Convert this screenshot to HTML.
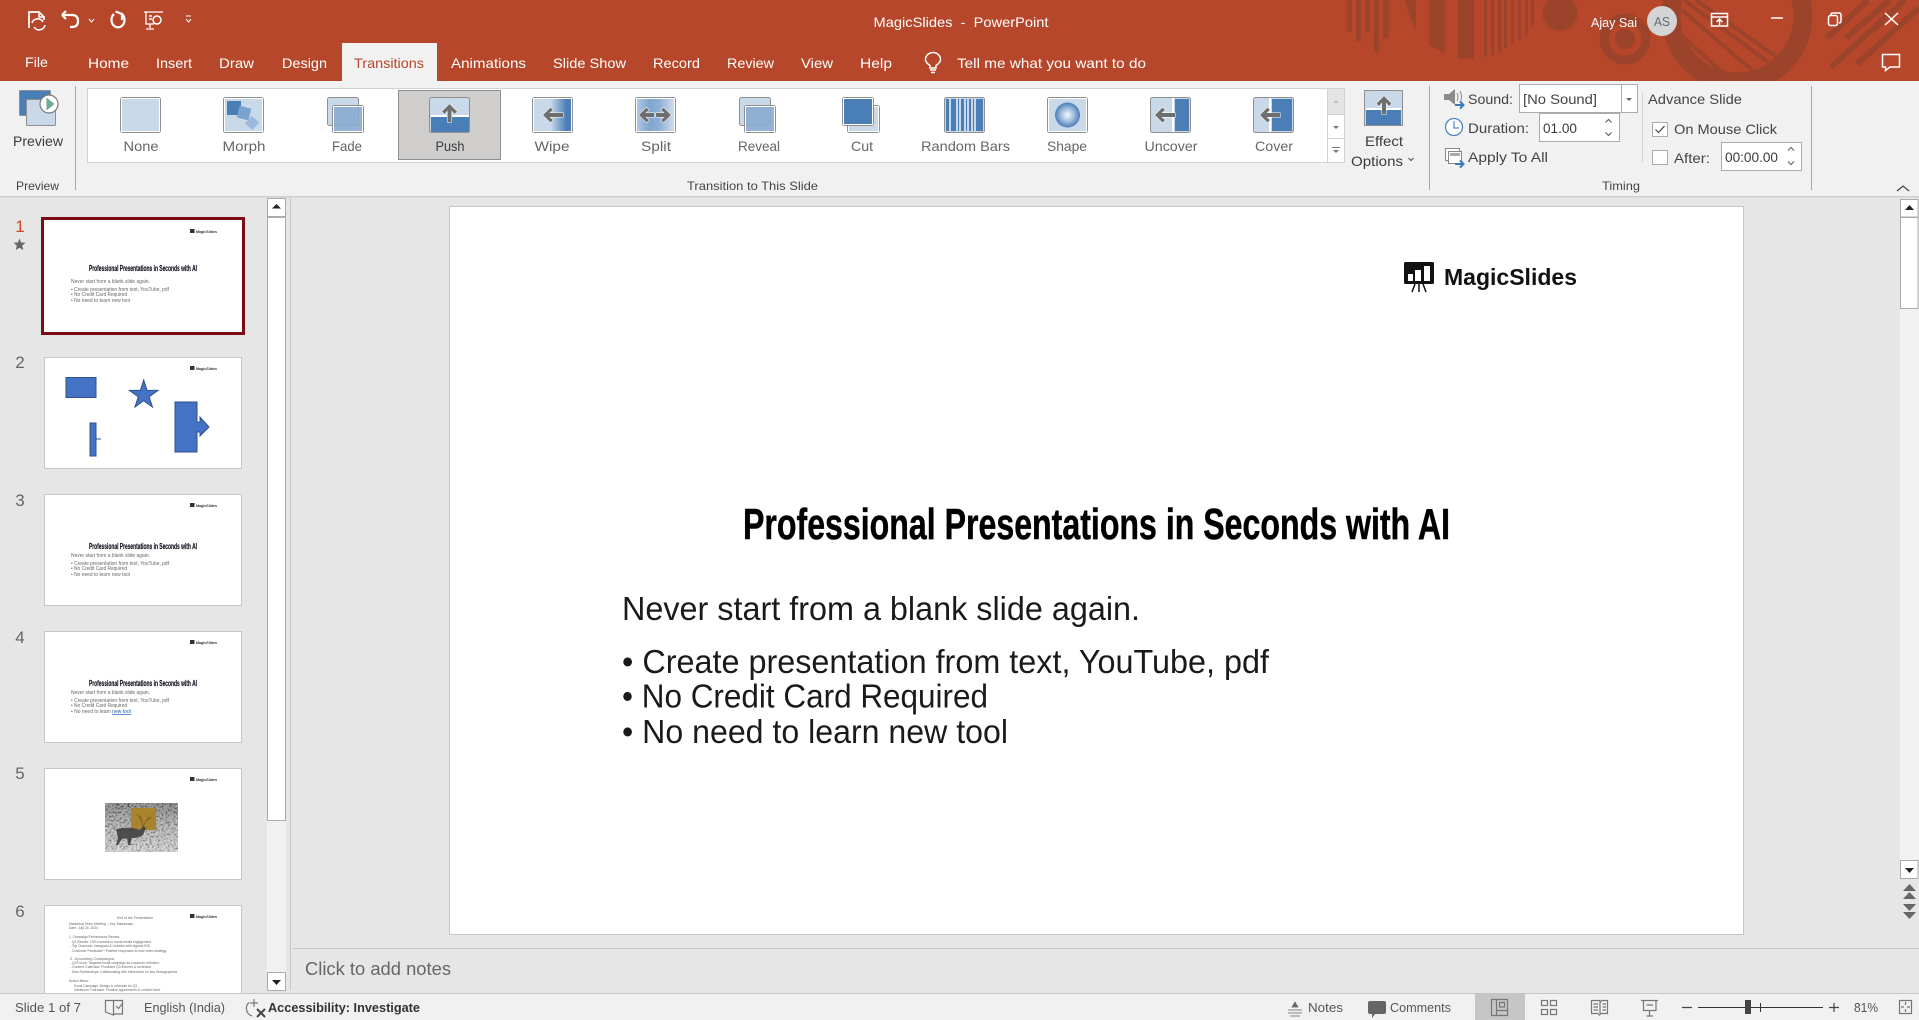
<!DOCTYPE html>
<html lang="en"><head><meta charset="utf-8"><title>MagicSlides - PowerPoint</title>
<style>
html,body{margin:0;padding:0;width:1919px;height:1020px;overflow:hidden;background:#e6e6e6}
svg{display:block}
text{font-family:"Liberation Sans",Arial,sans-serif}
.w{fill:#fff;font-size:14px}
.d{fill:#444;font-size:14px}
.g{fill:#666;font-size:14px}
.gl{fill:#444;font-size:12px}
.st{fill:#555;font-size:13px}
.n{fill:#666;font-size:17px}
.ib{fill:#c9d9ea;stroke:#8f8f8f}
.iw{fill:none;stroke:#fff}
.ar{fill:#6e6e6e;stroke:#fff;stroke-width:1;paint-order:stroke}
.wl{fill:none;stroke:#fff;stroke-width:1.5}
.dc{fill:#9c432b}
.ds{stroke:#9c432b;fill:none}
.bd{fill:#fff;stroke:#ababab}
.ic{fill:none;stroke:#777;stroke-width:1.2}
.tt{font-weight:bold;fill:#0d0d1a;font-size:8px;stroke:#0d0d1a;stroke-width:.15}
.tb{fill:#666;font-size:5.5px}
.tl{fill:#333;font-size:4px;font-weight:bold}
.t6{fill:#666;font-size:3.6px}
.sh{fill:#4472c4;stroke:#2f528f;stroke-width:1}
</style></head><body>
<svg xmlns="http://www.w3.org/2000/svg" width="1919" height="1020" viewBox="0 0 1919 1020">
<defs>
<clipPath id="barclip"><rect width="1919" height="81"/></clipPath>
<linearGradient id="wipe" x1="0" x2="1" y1="0" y2="0"><stop offset="0" stop-color="#c9d9ea"/><stop offset=".45" stop-color="#c9d9ea"/><stop offset=".85" stop-color="#4a7eb7"/><stop offset="1" stop-color="#4a7eb7"/></linearGradient>
<linearGradient id="split" x1="0" x2="1" y1="0" y2="0"><stop offset="0" stop-color="#b7cce3"/><stop offset=".35" stop-color="#7ea5d0"/><stop offset=".6" stop-color="#8fb0d6"/><stop offset="1" stop-color="#d5e1ee"/></linearGradient>
<radialGradient id="shape"><stop offset="0" stop-color="#f5f8fb"/><stop offset=".5" stop-color="#a5c0de"/><stop offset="1" stop-color="#4a7eb7"/></radialGradient>
<filter id="noise" x="0" y="0" width="1" height="1"><feTurbulence type="fractalNoise" baseFrequency=".5" numOctaves="2" seed="4"/><feColorMatrix values="2.2 0 0 0 -.6  2.2 0 0 0 -.6  2.2 0 0 0 -.6  0 0 0 0 1"/></filter>
<linearGradient id="pic" x1="0" x2="0" y1="0" y2="1"><stop offset="0" stop-color="#666"/><stop offset=".45" stop-color="#a5a5a5"/><stop offset="1" stop-color="#d5d5d5"/></linearGradient>
<path id="la" d="M0 0L7.5-7.5 10-5 6.5-2H20V2H6.5L10 5 7.5 7.5Z"/>
</defs>

<!-- backgrounds -->
<rect width="1919" height="1020" fill="#e6e6e6"/>
<rect width="1919" height="81" fill="#b7472a"/>
<rect y="81" width="1919" height="115" fill="#f1f1f1"/>
<rect y="196" width="1919" height="1.5" fill="#cfcfcf"/>

<!-- title bar decoration -->
<g clip-path="url(#barclip)">
<rect class="dc" x="1347" width="5" height="32"/><rect class="dc" x="1356" width="5" height="41"/><rect class="dc" x="1365" width="5" height="32"/><rect class="dc" x="1374" width="5" height="52"/><rect class="dc" x="1383" width="6" height="38"/>
<path class="dc" d="M1405 0C1408 12 1411 22 1416 30V0Z"/>
<path class="dc" d="M1429 0H1445V54L1429 45Z"/>
<path class="dc" d="M1458 0H1474V59L1458 58Z"/>
<rect class="dc" x="1484" width="3" height="57"/><rect class="dc" x="1491" width="3" height="55"/><rect class="dc" x="1498" width="3" height="52"/><rect class="dc" x="1504" width="3" height="48"/><rect class="dc" x="1511" width="3" height="44"/><rect class="dc" x="1518" width="3" height="40"/><rect class="dc" x="1525" width="3" height="35"/><rect class="dc" x="1531" width="3" height="27"/>
<circle class="dc" cx="1560" cy="13" r="17.5"/>
<circle class="dc" cx="1625" cy="39" r="10"/><circle class="ds" cx="1625" cy="39" r="21" stroke-width="9"/>
<circle class="ds" cx="1737" cy="16" r="66" stroke-width="19"/>
<g class="ds" stroke-width="4"><path d="M1684 0L1768 62"/><path d="M1696 0L1778 58"/><path d="M1682 10L1752 70"/><path d="M1682 36L1722 72"/></g>
<g class="ds" stroke-width="6"><path d="M1827 38L1868 0"/><path d="M1846 38L1890 0"/><path d="M1831 67L1905 0"/><path d="M1857 64L1919 8"/></g>
</g>

<!-- quick access -->
<g class="wl">
<path d="M29 28V12H39L44 17V20" stroke-width="1.800"/><path d="M39 12V17H44"/><path d="M32 23A6 6 0 0 1 43 22M45 25A6 6 0 0 1 34 27" stroke-width="1.600"/>
<path d="M62 15L66 11M62 15L66 19M62 15H72Q78 15 78 21T72 27H70" stroke-width="2.200"/>
<path d="M89 19L91.500 22L94 19" stroke-width="1"/>
<path d="M114 14A6.500 7.500 0 1 0 122 14M115.500 11.500L122 14V20" stroke-width="2.200"/>
<path d="M144 12H163M146 12V24H154M150 24V28M146 29H154" stroke-width="1.300"/><circle cx="157" cy="20" r="4"/><path d="M149 16H152M149 19H152"/>
<path d="M186 16H191M186 19L188.500 22L191 19" stroke-width="1"/>
</g>
<text class="w" x="961" y="27" text-anchor="middle" textLength="175" lengthAdjust="spacingAndGlyphs" xml:space="preserve">MagicSlides  -  PowerPoint</text>

<!-- top right -->
<text class="w" x="1591" y="27" style="font-size:13px" textLength="46" lengthAdjust="spacingAndGlyphs">Ajay Sai</text>
<circle cx="1662" cy="21" r="15" fill="#d4d4d4"/>
<text x="1662" y="26" text-anchor="middle" fill="#5f6b78" font-size="13" textLength="16" lengthAdjust="spacingAndGlyphs">AS</text>
<g class="wl" stroke-width="1.300">
<rect x="1711.500" y="13.500" width="16" height="12.500"/><path d="M1711 17H1728M1719.500 25V19M1716.500 22L1719.500 19L1722.500 22"/>
<path d="M1771 18H1783" stroke-width="1.500"/>
<rect x="1828.500" y="15.500" width="9" height="10" rx="2"/><path d="M1831 15V14Q1831 13 1833 13H1839Q1841 13 1841 15V21Q1841 23 1839 23"/>
<path d="M1885 13L1898 25M1898 13L1885 25" stroke-width="1.500"/>
<path d="M1882.500 54.500H1899.500V67H1890L1885.500 70.500V67H1882.500Z"/>
</g>

<!-- tabs -->
<rect x="342" y="43" width="95" height="38" fill="#f1f1f1"/>
<text class="w" x="25" y="67" textLength="23" lengthAdjust="spacingAndGlyphs">File</text>
<text class="w" x="88" y="68" textLength="41" lengthAdjust="spacingAndGlyphs">Home</text>
<text class="w" x="156" y="68" textLength="36" lengthAdjust="spacingAndGlyphs">Insert</text>
<text class="w" x="219" y="68" textLength="35" lengthAdjust="spacingAndGlyphs">Draw</text>
<text class="w" x="282" y="68" textLength="45" lengthAdjust="spacingAndGlyphs">Design</text>
<text x="354" y="68" fill="#b7472a" font-size="14" textLength="70" lengthAdjust="spacingAndGlyphs">Transitions</text>
<text class="w" x="451" y="68" textLength="75" lengthAdjust="spacingAndGlyphs">Animations</text>
<text class="w" x="553" y="68" textLength="73" lengthAdjust="spacingAndGlyphs">Slide Show</text>
<text class="w" x="653" y="68" textLength="47" lengthAdjust="spacingAndGlyphs">Record</text>
<text class="w" x="727" y="68" textLength="47" lengthAdjust="spacingAndGlyphs">Review</text>
<text class="w" x="801" y="68" textLength="32" lengthAdjust="spacingAndGlyphs">View</text>
<text class="w" x="860" y="68" textLength="32" lengthAdjust="spacingAndGlyphs">Help</text>
<path class="wl" stroke-width="1.200" d="M930 68V65.500Q925.500 62.500 925.500 59.500A7.500 7 0 0 1 940.500 59.500Q940.500 62.500 936 65.500V68ZM930 70H936M931 72.500H935"/>
<text class="w" x="957" y="68" textLength="189" lengthAdjust="spacingAndGlyphs">Tell me what you want to do</text>

<!-- preview button -->
<rect x="19.500" y="90.500" width="31" height="25" rx="1" fill="#4a7eb7" stroke="#8f8f8f"/>
<rect x="26.500" y="99.500" width="29" height="26" rx="1" fill="#c9d9ea" stroke="#8f8f8f"/>
<circle cx="49" cy="104" r="9" fill="#fff" stroke="#777" stroke-width="1.200"/>
<path d="M46.500 97.500L54.500 104L46.500 110.500Z" fill="#6fa893"/>
<text class="d" x="13" y="146" textLength="50" lengthAdjust="spacingAndGlyphs" style="fill:#3b3b3b">Preview</text>
<text class="gl" x="16" y="190" textLength="43" lengthAdjust="spacingAndGlyphs">Preview</text>
<rect x="75" y="86" width="1" height="104" fill="#a6a6a6"/>

<!-- gallery -->
<rect x="87.500" y="88.500" width="1257" height="74" fill="#fff" stroke="#d2d2d2"/>
<rect x="398.500" y="90.500" width="102" height="69" fill="#cfcecc" stroke="#8e8e8e"/>

<!-- None -->
<rect class="ib" x="120.500" y="97.500" width="40" height="35" rx="2"/><rect class="iw" x="121.500" y="98.500" width="38" height="33"/>
<!-- Morph -->
<rect class="ib" x="223.500" y="97.500" width="40" height="35" rx="2"/><rect class="iw" x="224.500" y="98.500" width="38" height="33"/>
<rect x="227" y="101" width="14" height="14" fill="#4a7eb7"/>
<rect x="238" y="107" width="12" height="12" fill="#7ba3cf" transform="rotate(15 244 113)"/>
<rect x="247" y="118" width="10" height="10" fill="#9ab9dc" transform="rotate(40 252 123)"/>
<!-- Fade -->
<rect class="ib" x="327.500" y="97.500" width="31" height="28" rx="2"/>
<rect x="332.500" y="105.500" width="31" height="27" rx="2" fill="#8aabd0" fill-opacity=".9" stroke="#8f8f8f"/><rect class="iw" x="333.500" y="106.500" width="29" height="25"/>
<!-- Push -->
<rect class="ib" x="429.500" y="97.500" width="40" height="35" rx="2"/>
<rect x="431" y="117" width="38" height="15" fill="#4a7eb7"/><rect x="431" y="115" width="38" height="2" fill="#fff"/>
<path class="ar" transform="translate(449.500 104) rotate(90)" d="M0 0L7.500-7.500 10-5 6.500-2H18V2H6.500L10 5 7.500 7.500Z"/>
<!-- Wipe -->
<rect x="532.500" y="97.500" width="40" height="35" rx="2" fill="url(#wipe)" stroke="#8f8f8f"/><rect class="iw" x="533.500" y="98.500" width="38" height="33"/>
<use href="#la" class="ar" x="543" y="115"/>
<!-- Split -->
<rect x="635.500" y="97.500" width="40" height="35" rx="2" fill="url(#split)" stroke="#8f8f8f"/><rect class="iw" x="636.500" y="98.500" width="38" height="33"/>
<path class="ar" transform="translate(639 115)" d="M0 0L7.500-7.500 10-5 6.500-2H15V2H6.500L10 5 7.500 7.500Z"/>
<path class="ar" transform="translate(671 115) scale(-1 1)" d="M0 0L7.500-7.500 10-5 6.500-2H15V2H6.500L10 5 7.500 7.500Z"/>
<!-- Reveal -->
<rect class="ib" x="739.500" y="97.500" width="31" height="28" rx="2"/>
<rect x="744.500" y="105.500" width="31" height="27" rx="2" fill="#8aabd0" fill-opacity=".9" stroke="#8f8f8f"/><rect class="iw" x="745.500" y="106.500" width="29" height="25"/>
<!-- Cut -->
<rect class="ib" x="847.500" y="105.500" width="32" height="27" rx="2"/><rect class="iw" x="848.500" y="106.500" width="30" height="25"/>
<rect x="842.500" y="97.500" width="31" height="28" rx="2" fill="#4a7eb7" stroke="#8f8f8f"/><rect class="iw" x="843.500" y="98.500" width="29" height="26"/>
<!-- Random bars -->
<rect class="ib" x="944.500" y="97.500" width="40" height="35" rx="2"/>
<g fill="#4a7eb7"><rect x="946" y="99" width="3" height="32"/><rect x="951" y="99" width="5" height="32"/><rect x="958" y="99" width="1" height="32"/><rect x="961" y="99" width="3" height="32"/><rect x="966" y="99" width="1" height="32"/><rect x="969" y="99" width="2" height="32"/><rect x="973" y="99" width="1" height="32"/><rect x="976" y="99" width="7" height="32"/></g>
<!-- Shape -->
<rect class="ib" x="1047.500" y="97.500" width="40" height="35" rx="2"/><rect class="iw" x="1048.500" y="98.500" width="38" height="33"/>
<circle cx="1067.500" cy="115" r="12.500" fill="url(#shape)"/>
<!-- Uncover -->
<rect class="ib" x="1150.500" y="97.500" width="40" height="35" rx="2"/>
<rect x="1175" y="99" width="14" height="32" fill="#4a7eb7"/><rect x="1172" y="98" width="2" height="34" fill="#fff"/>
<use href="#la" class="ar" x="1155" y="115"/>
<!-- Cover -->
<rect class="ib" x="1253.500" y="97.500" width="40" height="35" rx="2"/>
<rect x="1272" y="99" width="20" height="32" fill="#4a7eb7"/><rect x="1269" y="98" width="2" height="34" fill="#fff"/>
<use href="#la" class="ar" x="1260" y="115"/>

<g class="g">
<text x="141" y="151" text-anchor="middle" textLength="35" lengthAdjust="spacingAndGlyphs">None</text>
<text x="244" y="151" text-anchor="middle" textLength="43" lengthAdjust="spacingAndGlyphs">Morph</text>
<text x="347" y="151" text-anchor="middle" textLength="30" lengthAdjust="spacingAndGlyphs">Fade</text>
<text x="450" y="151" text-anchor="middle" textLength="29" lengthAdjust="spacingAndGlyphs" style="fill:#3b3b3b">Push</text>
<text x="552" y="151" text-anchor="middle" textLength="35" lengthAdjust="spacingAndGlyphs">Wipe</text>
<text x="656" y="151" text-anchor="middle" textLength="30" lengthAdjust="spacingAndGlyphs">Split</text>
<text x="759" y="151" text-anchor="middle" textLength="42" lengthAdjust="spacingAndGlyphs">Reveal</text>
<text x="862" y="151" text-anchor="middle" textLength="22" lengthAdjust="spacingAndGlyphs">Cut</text>
<text x="965.500" y="151" text-anchor="middle" textLength="89" lengthAdjust="spacingAndGlyphs">Random Bars</text>
<text x="1067" y="151" text-anchor="middle" textLength="40" lengthAdjust="spacingAndGlyphs">Shape</text>
<text x="1171" y="151" text-anchor="middle" textLength="53" lengthAdjust="spacingAndGlyphs">Uncover</text>
<text x="1274" y="151" text-anchor="middle" textLength="38" lengthAdjust="spacingAndGlyphs">Cover</text>
</g>

<!-- gallery scroll -->
<rect x="1327.500" y="88.500" width="17" height="26" fill="#e4e4e4" stroke="#d2d2d2"/>
<rect x="1327.500" y="114.500" width="17" height="24" fill="#fff" stroke="#d2d2d2"/>
<rect x="1327.500" y="138.500" width="17" height="24" fill="#fff" stroke="#d2d2d2"/>
<path d="M1333 103L1336 100L1339 103Z" fill="#bcbcbc"/>
<path d="M1333 126L1339 126L1336 129Z" fill="#777"/>
<path d="M1332 147H1340V148H1332ZM1333 150H1339L1336 153Z" fill="#777"/>

<text class="gl" x="687" y="190" textLength="131" lengthAdjust="spacingAndGlyphs">Transition to This Slide</text>

<!-- Effect options -->
<rect x="1364.500" y="90.500" width="38" height="35" fill="#c9d9ea" stroke="#8f8f8f"/>
<rect x="1366" y="110" width="35" height="15" fill="#4a7eb7"/><rect x="1366" y="108" width="35" height="2" fill="#fff"/>
<path class="ar" transform="translate(1384 96) rotate(90)" d="M0 0L7.500-7.500 10-5 6.500-2H18V2H6.500L10 5 7.500 7.500Z"/>
<text class="d" x="1365" y="146" textLength="38" lengthAdjust="spacingAndGlyphs" style="fill:#3b3b3b">Effect</text>
<text class="d" x="1351" y="166" textLength="52" lengthAdjust="spacingAndGlyphs" style="fill:#3b3b3b">Options</text>
<path d="M1408.500 158L1411 160.500L1413.500 158" fill="none" stroke="#444"/>

<rect x="1429" y="86" width="1" height="104" fill="#a6a6a6"/>

<!-- Timing -->
<path d="M1444 94H1449L1455 89V105L1449 100H1444Z" fill="#8a8a8a"/>
<path d="M1457 93Q1459 97 1457 101M1460 91Q1463 97 1460 103" fill="none" stroke="#8a8a8a"/>
<path d="M1455 105H1463M1460 101.500L1463.500 105L1460 108.500" fill="none" stroke="#3f7ab8" stroke-width="2"/>
<text class="d" x="1468" y="104" textLength="45" lengthAdjust="spacingAndGlyphs">Sound:</text>
<rect class="bd" x="1519.500" y="84.500" width="102" height="28"/>
<rect class="bd" x="1621.500" y="84.500" width="16" height="28"/>
<path d="M1626 98H1632L1629 101Z" fill="#666"/>
<text x="1523" y="104" fill="#444" font-size="14" textLength="74" lengthAdjust="spacingAndGlyphs">[No Sound]</text>

<circle cx="1454" cy="127" r="8.500" fill="#fff" stroke="#4f86c0" stroke-width="1.300"/>
<path d="M1454 121V128H1459" fill="none" stroke="#4f86c0" stroke-width="1.200"/>
<text class="d" x="1468" y="133" textLength="61" lengthAdjust="spacingAndGlyphs">Duration:</text>
<rect class="bd" x="1539.500" y="113.500" width="80" height="28"/>
<text x="1543" y="133" fill="#3b3b3b" font-size="14" textLength="34" lengthAdjust="spacingAndGlyphs">01.00</text>
<path d="M1605.500 122.500L1608.500 119.500L1611.500 122.500M1605.500 132.500L1608.500 135.500L1611.500 132.500" fill="none" stroke="#555"/>

<rect x="1445.500" y="148.500" width="14" height="12" fill="#fff" stroke="#888"/>
<rect x="1448.500" y="151.500" width="13" height="12" fill="#fff" stroke="#888"/>
<rect x="1450" y="153" width="10" height="3" fill="#aaa"/>
<path d="M1455 164H1463M1460 160.500L1463.500 164L1460 167.500" fill="none" stroke="#3f7ab8" stroke-width="2"/>
<text class="d" x="1468" y="162" textLength="80" lengthAdjust="spacingAndGlyphs">Apply To All</text>

<rect x="1642" y="93" width="1" height="69" fill="#d2d2d2"/>
<text class="d" x="1648" y="104" textLength="94" lengthAdjust="spacingAndGlyphs">Advance Slide</text>
<rect class="bd" x="1652.500" y="122.500" width="15" height="14" stroke="#888"/>
<path d="M1655.500 129.500L1658.500 132.500L1664.500 126" fill="none" stroke="#444" stroke-width="1.200"/>
<text class="d" x="1674" y="134" textLength="103" lengthAdjust="spacingAndGlyphs">On Mouse Click</text>
<rect class="bd" x="1652.500" y="150.500" width="15" height="14" stroke="#888"/>
<text class="d" x="1674" y="163" textLength="36" lengthAdjust="spacingAndGlyphs">After:</text>
<rect class="bd" x="1721.500" y="142.500" width="80" height="28"/>
<text x="1725" y="162" fill="#3b3b3b" font-size="14" textLength="53" lengthAdjust="spacingAndGlyphs">00:00.00</text>
<path d="M1788 150.500L1791 147.500L1794 150.500M1788 161.500L1791 164.500L1794 161.500" fill="none" stroke="#555"/>
<text class="gl" x="1602" y="190" textLength="38" lengthAdjust="spacingAndGlyphs">Timing</text>
<rect x="1811" y="86" width="1" height="104" fill="#a6a6a6"/>
<path d="M1897 191L1903 186L1909 191" fill="none" stroke="#444" stroke-width="1.200"/>

<!-- left scrollbar -->
<rect x="267" y="198" width="19" height="792" fill="#f1f1f1"/>
<rect x="267.500" y="198.500" width="18" height="18" fill="#fff" stroke="#ababab"/>
<path d="M272 208.500H281L276.500 204Z" fill="#222"/>
<rect x="267.500" y="217.500" width="18" height="603" fill="#fff" stroke="#ababab"/>
<rect x="267.500" y="972.500" width="18" height="18" fill="#fff" stroke="#ababab"/>
<path d="M272 980H281L276.500 985Z" fill="#222"/>
<rect x="290" y="198" width="1" height="792" fill="#c6c6c6"/>

<!-- thumbnails -->
<text class="n" x="20" y="232" text-anchor="middle" style="fill:#d24726">1</text>
<path d="M19.500 238.500L21 242.500L25.500 242.800L22.200 245.600L23.300 250L19.500 247.700L15.700 250L16.800 245.600L13.500 242.800L18 242.500Z" fill="#666"/>
<text class="n" x="20" y="368" text-anchor="middle">2</text>
<text class="n" x="20" y="506" text-anchor="middle">3</text>
<text class="n" x="20" y="643" text-anchor="middle">4</text>
<text class="n" x="20" y="779" text-anchor="middle">5</text>
<text class="n" x="20" y="917" text-anchor="middle">6</text>

<!-- thumb 1 -->
<rect x="42.500" y="218.500" width="201" height="115" fill="#fff" stroke="#7a0c14" stroke-width="3"/>
<g transform="translate(44 220)">
<rect x="146" y="9" width="4.500" height="4" fill="#333"/><text class="tl" x="152" y="13" textLength="21" lengthAdjust="spacingAndGlyphs">MagicSlides</text>
<text class="tt" x="45" y="51" textLength="108" lengthAdjust="spacingAndGlyphs">Professional Presentations in Seconds with AI</text>
<text class="tb" x="27" y="63" textLength="79" lengthAdjust="spacingAndGlyphs">Never start from a blank slide again.</text>
<text class="tb" x="27" y="71" textLength="98" lengthAdjust="spacingAndGlyphs">• Create presentation from text, YouTube, pdf</text>
<text class="tb" x="27" y="76" textLength="56" lengthAdjust="spacingAndGlyphs">• No Credit Card Required</text>
<text class="tb" x="27" y="82" textLength="59" lengthAdjust="spacingAndGlyphs">• No need to learn new tool</text>
</g>

<!-- thumb 2 -->
<rect x="44.500" y="357.500" width="197" height="111" fill="#fff" stroke="#c6c6c6"/>
<rect x="190" y="366" width="4.500" height="4" fill="#333"/><text class="tl" x="196" y="370" textLength="21" lengthAdjust="spacingAndGlyphs">MagicSlides</text>
<rect class="sh" x="66" y="377.500" width="30" height="20"/>
<polygon class="sh" points="143.700,380 147.050,390.400 158,390.400 149.100,396.800 152.500,407.100 143.700,400.700 134.900,407.100 138.300,396.800 129.400,390.400 140.350,390.400"/>
<path class="sh" d="M175 402H197V422H200V417L209 427L200 436V432H197V452H175Z"/>
<path class="sh" d="M90 423H96V456H90Z"/><path d="M96 439H101" stroke="#2f528f"/>

<!-- thumb 3 -->
<rect x="44.500" y="494.500" width="197" height="111" fill="#fff" stroke="#c6c6c6"/>
<g transform="translate(44 494)">
<rect x="146" y="9" width="4.500" height="4" fill="#333"/><text class="tl" x="152" y="13" textLength="21" lengthAdjust="spacingAndGlyphs">MagicSlides</text>
<text class="tt" x="45" y="55" textLength="108" lengthAdjust="spacingAndGlyphs">Professional Presentations in Seconds with AI</text>
<text class="tb" x="27" y="63" textLength="79" lengthAdjust="spacingAndGlyphs">Never start from a blank slide again.</text>
<text class="tb" x="27" y="71" textLength="98" lengthAdjust="spacingAndGlyphs">• Create presentation from text, YouTube, pdf</text>
<text class="tb" x="27" y="76" textLength="56" lengthAdjust="spacingAndGlyphs">• No Credit Card Required</text>
<text class="tb" x="27" y="82" textLength="59" lengthAdjust="spacingAndGlyphs">• No need to learn new tool</text>
</g>

<!-- thumb 4 -->
<rect x="44.500" y="631.500" width="197" height="111" fill="#fff" stroke="#c6c6c6"/>
<g transform="translate(44 631)">
<rect x="146" y="9" width="4.500" height="4" fill="#333"/><text class="tl" x="152" y="13" textLength="21" lengthAdjust="spacingAndGlyphs">MagicSlides</text>
<text class="tt" x="45" y="55" textLength="108" lengthAdjust="spacingAndGlyphs">Professional Presentations in Seconds with AI</text>
<text class="tb" x="27" y="63" textLength="79" lengthAdjust="spacingAndGlyphs">Never start from a blank slide again.</text>
<text class="tb" x="27" y="71" textLength="98" lengthAdjust="spacingAndGlyphs">• Create presentation from text, YouTube, pdf</text>
<text class="tb" x="27" y="76" textLength="56" lengthAdjust="spacingAndGlyphs">• No Credit Card Required</text>
<text class="tb" x="27" y="82" textLength="40" lengthAdjust="spacingAndGlyphs">• No need to learn</text>
<text class="tb" x="68" y="82" textLength="19" lengthAdjust="spacingAndGlyphs" style="fill:#1f5fb0">new tool</text>
<rect x="68" y="83" width="19" height=".7" fill="#1f5fb0"/>
</g>

<!-- thumb 5 -->
<rect x="44.500" y="768.500" width="197" height="111" fill="#fff" stroke="#c6c6c6"/>
<rect x="190" y="777" width="4.500" height="4" fill="#333"/><text class="tl" x="196" y="781" textLength="21" lengthAdjust="spacingAndGlyphs">MagicSlides</text>
<rect x="105" y="803" width="73" height="49" filter="url(#noise)"/>
<rect x="105" y="803" width="73" height="49" fill="url(#pic)" opacity=".6"/>
<rect x="131" y="808" width="25" height="22" fill="#a8842f"/>
<path d="M116 829Q130 826 140 830L143 826L146 828L143 835Q140 838 132 838L130 845H128L127 838L122 839L118 845H116L118 838Z" fill="#3a3a3a" opacity=".85"/>
<path d="M143 826L140 816M143 826L150 815M141 820L137 814M147 820L152 817" stroke="#6d5020" stroke-width=".6" fill="none"/>

<!-- thumb 6 -->
<rect x="44.500" y="905.500" width="197" height="110" fill="#fff" stroke="#c6c6c6"/>
<rect x="190" y="914" width="4.500" height="4" fill="#333"/><text class="tl" x="196" y="918" textLength="21" lengthAdjust="spacingAndGlyphs">MagicSlides</text>
<g class="t6">
<text x="117" y="919" textLength="36" lengthAdjust="spacingAndGlyphs">End of the Presentation</text>
<text x="69" y="925" textLength="64" lengthAdjust="spacingAndGlyphs">Marketing Team Meeting – Key Takeaways</text>
<text x="69" y="929" textLength="29" lengthAdjust="spacingAndGlyphs">Date: July 25, 2024</text>
<text x="69" y="938" textLength="51" lengthAdjust="spacingAndGlyphs">1. Campaign Performance Review:</text>
<text x="70" y="943" textLength="82" lengthAdjust="spacingAndGlyphs">- Q2 Results: 15% increase in social media engagement.</text>
<text x="70" y="947" textLength="81" lengthAdjust="spacingAndGlyphs">- Top Channels: Instagram &amp; LinkedIn with highest ROI.</text>
<text x="70" y="952" textLength="97" lengthAdjust="spacingAndGlyphs">- Customer Feedback** Positive responses to new video strategy.</text>
<text x="70" y="960" textLength="45" lengthAdjust="spacingAndGlyphs">2. Upcoming Campaigns:</text>
<text x="70" y="964" textLength="90" lengthAdjust="spacingAndGlyphs">- Q3 Focus: Targeted email campaign for customer retention.</text>
<text x="70" y="968" textLength="82" lengthAdjust="spacingAndGlyphs">- Content Calendar: Finalized Q3 themes &amp; schedule.</text>
<text x="70" y="973" textLength="108" lengthAdjust="spacingAndGlyphs">- New Partnerships: Collaborating with influencers for key demographics.</text>
<text x="69" y="982" textLength="20" lengthAdjust="spacingAndGlyphs">Action Items:</text>
<text x="74" y="987" textLength="64" lengthAdjust="spacingAndGlyphs">Email Campaign: Design &amp; schedule for Q3.</text>
<text x="74" y="991" textLength="87" lengthAdjust="spacingAndGlyphs">Influencer Outreach: Finalize agreements &amp; content brief.</text>
</g>

<!-- main slide -->
<rect x="449.500" y="206.500" width="1294" height="728" fill="#fff" stroke="#c6c6c6"/>
<rect x="1404" y="262" width="30" height="22" rx="1.500" fill="#111"/>
<rect x="1408" y="274" width="5" height="7" fill="#fff"/><rect x="1415" y="270" width="6" height="11" fill="#fff"/><rect x="1424" y="266" width="6" height="15" fill="#fff"/>
<path d="M1415 284L1412 292M1419 284V292M1423 284L1426 292" stroke="#111" stroke-width="1.500" fill="none"/>
<text x="1444" y="285" font-size="23" font-weight="bold" fill="#111" textLength="133" lengthAdjust="spacingAndGlyphs">MagicSlides</text>
<text x="743" y="539" font-size="44" font-weight="bold" fill="#000" stroke="#000" stroke-width=".5" textLength="707" lengthAdjust="spacingAndGlyphs">Professional Presentations in Seconds with AI</text>
<g font-size="33" fill="#1a1a1a">
<text x="622" y="620" textLength="518" lengthAdjust="spacingAndGlyphs">Never start from a blank slide again.</text>
<text x="622" y="673" textLength="647" lengthAdjust="spacingAndGlyphs">• Create presentation from text, YouTube, pdf</text>
<text x="622" y="707.500" textLength="366" lengthAdjust="spacingAndGlyphs">• No Credit Card Required</text>
<text x="622" y="743" textLength="386" lengthAdjust="spacingAndGlyphs">• No need to learn new tool</text>
</g>

<!-- right scrollbar -->
<rect x="1900" y="199" width="19" height="680" fill="#f1f1f1"/>
<rect x="1900.500" y="199.500" width="17.500" height="17.500" fill="#fff" stroke="#ababab"/>
<path d="M1905 210H1914L1909.500 205Z" fill="#222"/>
<rect x="1900.500" y="217.500" width="17.500" height="91" fill="#fff" stroke="#ababab"/>
<rect x="1900.500" y="860.500" width="17.500" height="18" fill="#fff" stroke="#ababab"/>
<path d="M1905 868H1914L1909.500 873Z" fill="#222"/>
<path d="M1903 891L1909.500 884L1916 891ZM1903 899L1909.500 892L1916 899ZM1903 904L1909.500 911L1916 904ZM1903 912L1909.500 919L1916 912Z" fill="#666"/>

<!-- notes -->
<rect x="293" y="948" width="1626" height="1" fill="#c6c6c6"/>
<text x="305" y="975" font-size="18" fill="#666" textLength="146" lengthAdjust="spacingAndGlyphs">Click to add notes</text>

<!-- status bar -->
<rect y="993" width="1919" height="27" fill="#f1f1f1"/>
<rect y="993" width="1919" height="1" fill="#c6c6c6"/>
<text class="st" x="15" y="1012" textLength="66" lengthAdjust="spacingAndGlyphs">Slide 1 of 7</text>
<path class="ic" d="M105.500 1000.500H113.500V1015L105.500 1012ZM113.500 1015L115 1014H122.500V1000.500H113.500M116 1006L118.500 1008.500L122 1004"/>
<text class="st" x="144" y="1012" textLength="81" lengthAdjust="spacingAndGlyphs">English (India)</text>
<path class="ic" d="M249 1002.500A8 8 0 0 0 252 1016M254 999V1007M250 1003H258" stroke="#555"/>
<path d="M257 1009L265 1017M265 1009L257 1017" stroke="#444" stroke-width="2"/>
<text x="268" y="1012" font-size="13" font-weight="bold" fill="#333" textLength="152" lengthAdjust="spacingAndGlyphs">Accessibility: Investigate</text>

<path d="M1288 1010H1302M1288 1013H1302M1290 1016H1300M1292 1007L1295 1002L1298 1007Z" fill="#666" stroke="#666" stroke-width=".7"/>
<text class="st" x="1308" y="1012" textLength="35" lengthAdjust="spacingAndGlyphs">Notes</text>
<path d="M1370 1001H1384Q1386 1001 1386 1003V1012Q1386 1014 1384 1014H1375L1372 1018V1014H1370Q1368 1014 1368 1012V1003Q1368 1001 1370 1001Z" fill="#666"/>
<text class="st" x="1390" y="1012" textLength="61" lengthAdjust="spacingAndGlyphs">Comments</text>
<rect x="1475" y="994" width="50" height="26" fill="#c6c6c6"/>
<path class="ic" d="M1491.500 999.500H1507.500V1015.500H1491.500ZM1496.500 999.500V1015.500M1496.500 1010.500H1507.500M1499.500 1002.500H1504.500V1007H1499.500Z" stroke="#666"/>
<path class="ic" d="M1541.500 1000.500H1547.500V1005.500H1541.500ZM1550.500 1000.500H1556.500V1005.500H1550.500ZM1541.500 1009.500H1547.500V1014.500H1541.500ZM1550.500 1009.500H1556.500V1014.500H1550.500Z"/>
<path class="ic" d="M1591.500 1000.500H1599.500L1600.500 1002L1601.500 1000.500H1607.500V1013.500H1601L1599.500 1015L1598 1013.500H1591.500ZM1600 1002V1013M1593.500 1004H1598M1593.500 1007H1598M1593.500 1010H1598M1602.500 1004H1606M1602.500 1007H1606M1602.500 1010H1606"/>
<path class="ic" d="M1641 1000.500H1658M1643.500 1000.500V1010.500H1656V1000.500M1646.500 1005H1653M1649.500 1010.500V1016M1646.500 1016H1653"/>
<path d="M1682 1007.500H1692M1829 1007.500H1839M1834 1003V1012" stroke="#444" stroke-width="1.200"/>
<rect x="1698" y="1007" width="125" height="1" fill="#333"/>
<rect x="1760" y="1003" width="1" height="9" fill="#333"/>
<rect x="1745" y="1000" width="6" height="14" fill="#444"/>
<text class="st" x="1854" y="1012" textLength="24" lengthAdjust="spacingAndGlyphs">81%</text>
<path class="ic" d="M1899.500 1000.500H1911.500V1013.500H1899.500ZM1905.500 1002V1005M1905.500 1009V1012M1901 1007H1904M1907 1007H1910"/>
</svg>
</body></html>
